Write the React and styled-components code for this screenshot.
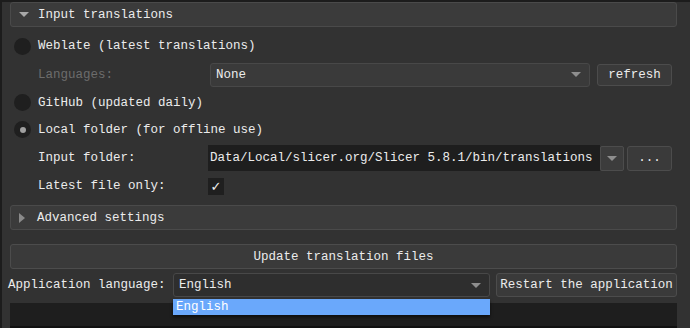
import React from 'react';
import styled, { createGlobalStyle } from 'styled-components';

const GlobalStyle = createGlobalStyle`
  html, body {
    margin: 0;
    padding: 0;
    background: #323232;
  }
`;

const Window = styled.div`
  position: relative;
  width: 690px;
  height: 328px;
  box-sizing: border-box;
  background: #323232;
  border-top: 2px solid #1c1c1c;
  border-left: 2px solid #1c1c1c;
  padding: 0 13px 0 8px;
  font-family: "Liberation Mono", "DejaVu Sans Mono", monospace;
  font-size: 12.5px;
  color: #ececec;
  overflow: hidden;
`;

const Section = styled.div`
  margin-top: ${(p) => p.mt || 0}px;
`;

const SectionHeader = styled.div`
  display: flex;
  align-items: center;
  height: 25px;
  box-sizing: border-box;
  background: #3b3b3b;
  border: 1px solid #4a4a4a;
  border-radius: 3px;
  padding-left: 8px;
  gap: ${(p) => p.gap || 9}px;
`;

const SectionBody = styled.div`
  display: flex;
  flex-direction: column;
  padding: 5px 0 0 4px;
`;

const Row = styled.div`
  display: flex;
  align-items: ${(p) => (p.bottom ? 'flex-end' : 'center')};
  height: ${(p) => p.h || 27}px;
`;

const Radio = styled.span`
  width: 17px;
  height: 17px;
  border-radius: 50%;
  background: #1f1f1f;
  display: flex;
  align-items: center;
  justify-content: center;
  margin-right: 7px;
  flex: none;
  &::after {
    content: '';
    width: 6px;
    height: 6px;
    border-radius: 50%;
    background: ${(p) => (p.checked ? '#a0a0a0' : 'transparent')};
  }
`;

const Label = styled.span`
  width: ${(p) => p.w || 'auto'};
  flex: none;
  margin-left: ${(p) => p.ml || 0}px;
  padding-left: ${(p) => p.indent || 0}px;
  color: ${(p) => (p.disabled ? '#6c6c6c' : '#ececec')};
  white-space: nowrap;
`;

const Combo = styled.div`
  display: flex;
  align-items: center;
  justify-content: space-between;
  box-sizing: border-box;
  width: ${(p) => p.w}px;
  height: 24px;
  background: ${(p) => p.bg || '#3a3a3a'};
  border: 1px solid #484848;
  border-radius: 3px;
  padding: 0 8px 0 5px;
  flex: none;
`;

const Arrow = styled.span`
  width: 0;
  height: 0;
  border-left: 5px solid transparent;
  border-right: 5px solid transparent;
  border-top: 5px solid ${(p) => p.color || '#8e8e8e'};
`;

const RightArrow = styled.span`
  width: 0;
  height: 0;
  border-top: 5px solid transparent;
  border-bottom: 5px solid transparent;
  border-left: 6px solid #8a8a8a;
`;

const Button = styled.div`
  display: flex;
  align-items: center;
  justify-content: center;
  box-sizing: border-box;
  width: ${(p) => (p.w ? `${p.w}px` : 'auto')};
  flex: ${(p) => (p.grow ? 1 : 'none')};
  height: ${(p) => p.h || 22}px;
  background: #3a3a3a;
  border: 1px solid #4c4c4c;
  border-radius: 3px;
  margin-left: ${(p) => p.ml || 0}px;
  white-space: nowrap;
`;

const PathField = styled.div`
  display: flex;
  align-items: center;
  box-sizing: border-box;
  width: 392px;
  height: 26px;
  background: #1e1e1e;
  padding-left: 2px;
  white-space: nowrap;
  flex: none;
`;

const DropButton = styled.div`
  display: flex;
  align-items: center;
  justify-content: center;
  box-sizing: border-box;
  width: 24px;
  height: 25px;
  background: #3c3c3c;
  border: 1px solid #4c4c4c;
  border-radius: 2px;
  flex: none;
`;

const Check = styled.span`
  display: flex;
  align-items: center;
  justify-content: center;
  width: 16px;
  height: 17px;
  background: #1f1f1f;
  color: #f0f0f0;
  font-family: "DejaVu Sans", sans-serif;
  font-size: 13px;
`;

const LogArea = styled.div`
  position: absolute;
  left: 8px;
  right: 13px;
  top: 301px;
  bottom: 0;
  background: #1e1e1e;
  border-bottom: 2px solid #111;
`;

const Popup = styled.div`
  position: absolute;
  left: 171px;
  top: 297px;
  width: 317px;
  height: 16px;
  box-sizing: border-box;
  background: #6aa8fb;
  color: #ffffff;
  padding-left: 3px;
  line-height: 16px;
  box-shadow: 0 2px 3px rgba(0, 0, 0, 0.6);
  z-index: 2;
`;

const App = () => (
  <Window>
    <GlobalStyle />
    <Section>
      <SectionHeader>
        <Arrow color="#a8a8a8" />
        Input translations
      </SectionHeader>
      <SectionBody>
        <Row h={28}>
          <Radio />
          Weblate (latest translations)
        </Row>
        <Row h={29}>
          <Label w="172px" indent={24} disabled>Languages:</Label>
          <Combo w={380}>
            None
            <Arrow />
          </Combo>
          <Button w={75} ml={7}>refresh</Button>
        </Row>
        <Row h={27}>
          <Radio />
          GitHub (updated daily)
        </Row>
        <Row h={27}>
          <Radio checked />
          Local folder (for offline use)
        </Row>
        <Row h={30}>
          <Label w="170px" indent={24}>Input folder:</Label>
          <PathField>Data/Local/slicer.org/Slicer 5.8.1/bin/translations</PathField>
          <DropButton><Arrow /></DropButton>
          <Button w={45} h={25} ml={3}>...</Button>
        </Row>
        <Row h={26}>
          <Label w="170px" indent={24}>Latest file only:</Label>
          <Check>✓</Check>
        </Row>
      </SectionBody>
    </Section>
    <Section mt={6}>
      <SectionHeader gap={12}>
        <RightArrow />
        Advanced settings
      </SectionHeader>
    </Section>
    <Row h={39} bottom>
      <Button grow h={25}>Update translation files</Button>
    </Row>
    <Row h={32}>
      <Label w="165px" ml={-2}>Application language:</Label>
      <Combo w={317} bg="#2e2e2e">
        English
        <Arrow />
      </Combo>
      <Button grow h={24} ml={6}>Restart the application</Button>
    </Row>
    <LogArea />
    <Popup>English</Popup>
  </Window>
);

export default App;
